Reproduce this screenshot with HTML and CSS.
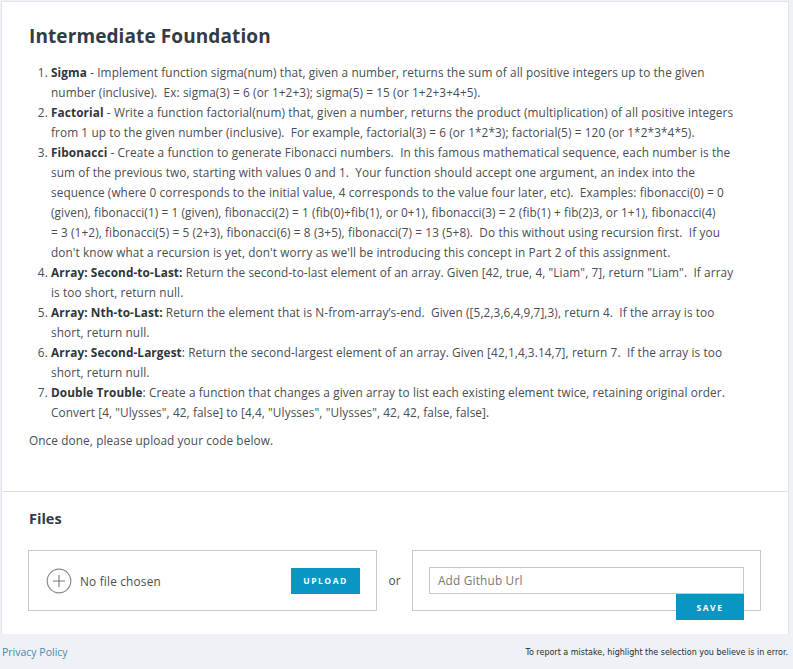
FILE: index.html
```html
<!DOCTYPE html>
<html>
<head>
<meta charset="utf-8">
<link rel="stylesheet" href="styles.css">
</head>
<body>
<div class="card">
  <section class="desc">
    <h1 class="title">Intermediate Foundation</h1>
    <ol class="tasks">
      <li><b>Sigma</b> - Implement function sigma(num) that, given a number, returns the sum of all positive integers up to the given number (inclusive).&nbsp; Ex: sigma(3) = 6 (or 1+2+3); sigma(5) = 15 (or 1+2+3+4+5).</li>
      <li><b>Factorial</b> - Write a function factorial(num) that, given a number, returns the product (multiplication) of all positive integers from 1 up to the given number (inclusive).&nbsp; For example, factorial(3) = 6 (or 1*2*3); factorial(5) = 120 (or 1*2*3*4*5).</li>
      <li><b>Fibonacci</b> - Create a function to generate Fibonacci numbers.&nbsp; In this famous mathematical sequence, each number is the sum of the previous two, starting with values 0 and 1.&nbsp; Your function should accept one argument, an index into the sequence (where 0 corresponds to the initial value, 4 corresponds to the value four later, etc).&nbsp; Examples: fibonacci(0) = 0 (given), fibonacci(1) = 1 (given), fibonacci(2) = 1 (fib(0)+fib(1), or 0+1), fibonacci(3) = 2 (fib(1) + fib(2)3, or 1+1), fibonacci(4) =&nbsp;3 (1+2), fibonacci(5) = 5 (2+3), fibonacci(6) = 8 (3+5), fibonacci(7) = 13 (5+8).&nbsp; Do this without using recursion first.&nbsp; If you don't know what a recursion is yet, don't worry as we'll be introducing this concept in Part 2 of this assignment.</li>
      <li><b>Array: Second-to-Last:</b> Return the second-to-last element of an array. Given [42, true, 4, "Liam", 7], return "Liam".&nbsp; If array is too short, return null.</li>
      <li><b>Array: Nth-to-Last:</b> Return the element that is N-from-array’s-end.&nbsp; Given ([5,2,3,6,4,9,7],3), return 4.&nbsp; If the array is too short, return null.</li>
      <li><b>Array: Second-Largest</b>: Return the second-largest element of an array. Given [42,1,4,3.14,7], return 7.&nbsp; If the array is too short, return null.</li>
      <li><b>Double Trouble</b>: Create a function that changes a given array to list each existing element twice, retaining original order.&nbsp; Convert [4, "Ulysses", 42, false] to [4,4, "Ulysses", "Ulysses", 42, 42, false, false].</li>
    </ol>
    <p class="note">Once done, please upload your code below.</p>
  </section>
  <section class="files">
    <h2 class="files-title">Files</h2>
    <div class="files-row">
      <div class="upload-box">
        <span class="plus">
          <svg width="26" height="26" viewBox="0 0 26 26"><circle cx="13" cy="13" r="11.8" fill="none" stroke="#8a8a8a" stroke-width="1.2"/><path d="M13 7v12M7 13h12" stroke="#777" stroke-width="1.1"/></svg>
        </span>
        <span class="nofile">No file chosen</span>
        <span class="btn">UPLOAD</span>
      </div>
      <span class="or">or</span>
      <div class="url-box">
        <div class="url-input">Add Github Url</div>
        <span class="btn save">SAVE</span>
      </div>
    </div>
  </section>
</div>
<footer class="foot">
  <a class="privacy">Privacy Policy</a>
  <span class="report">To report a mistake, highlight the selection you believe is in error.</span>
</footer>
</body>
</html>
```
FILE: styles.css
```css
html, body {
  margin: 0;
  padding: 0;
  background: #eef1f5;
}
body {
  width: 793px;
  height: 669px;
  overflow: hidden;
  font-family: "Open Sans", "DejaVu Sans", sans-serif;
  color: #4a4d52;
}
.card {
  margin: 1px 4px 0 1px;
  background: #fff;
  border: 1px solid #e1e4e8;
  border-bottom: none;
}
.desc {
  padding: 20px 54px 41px 27px;
  border-bottom: 1px solid #dcdfe3;
}
.title {
  margin: 0 0 12px 0;
  font-size: 19px;
  font-weight: 700;
  line-height: 28px;
  color: #333b44;
  letter-spacing: 0.1px;
}
.tasks {
  margin: 0;
  padding-left: 22px;
  font-size: 11.8px;
  letter-spacing: 0.1px;
  line-height: 20px;
}
.tasks b {
  color: #2f353b;
}
.note {
  margin: 8px 0 0 0;
  font-size: 11.8px;
  letter-spacing: 0.1px;
  line-height: 20px;
}
.files {
  padding: 16px 27px 23px 26px;
}
.files-title {
  margin: 0 0 20px 1px;
  font-size: 14.5px;
  line-height: 22px;
  font-weight: 700;
  color: #333b44;
}
.files-row {
  display: flex;
  align-items: flex-start;
}
.upload-box {
  width: 350px;
  height: 61px;
  border: 1px solid #c8c8c8;
  display: flex;
  align-items: center;
  padding: 0 16px 0 17px;
  box-sizing: border-box;
}
.plus {
  display: flex;
  width: 26px;
  height: 26px;
  margin-right: 8px;
}
.nofile {
  font-size: 11.8px;
  letter-spacing: 0.2px;
  flex: 1;
  color: #4a4d52;
}
.btn {
  display: inline-flex;
  align-items: center;
  justify-content: center;
  width: 69px;
  height: 26px;
  flex-shrink: 0;
  background: #0996c4;
  color: #fff;
  font-size: 8.5px;
  font-weight: 700;
  letter-spacing: 1.5px;
}
.or {
  width: 35px;
  text-align: center;
  font-size: 11.8px;
  line-height: 61px;
}
.url-box {
  width: 350px;
  height: 61px;
  border: 1px solid #c8c8c8;
  box-sizing: border-box;
  padding: 16px 16px 0 16px;
  display: flex;
  flex-direction: column;
  align-items: flex-end;
}
.url-input {
  align-self: stretch;
  height: 27px;
  flex-shrink: 0;
  border: 1px solid #c8c8c8;
  box-sizing: border-box;
  padding-left: 8px;
  font-size: 11.8px;
  letter-spacing: 0.2px;
  line-height: 25px;
  color: #777;
}
.save {
  width: 68px;
}
.foot {
  display: flex;
  justify-content: space-between;
  align-items: center;
  padding: 11px 5px 0 2px;
}
.privacy {
  font-size: 10.5px;
  color: #4889b3;
}
.report {
  font-family: "DejaVu Sans", sans-serif;
  font-size: 8px;
  color: #2b2b2b;
}
```
